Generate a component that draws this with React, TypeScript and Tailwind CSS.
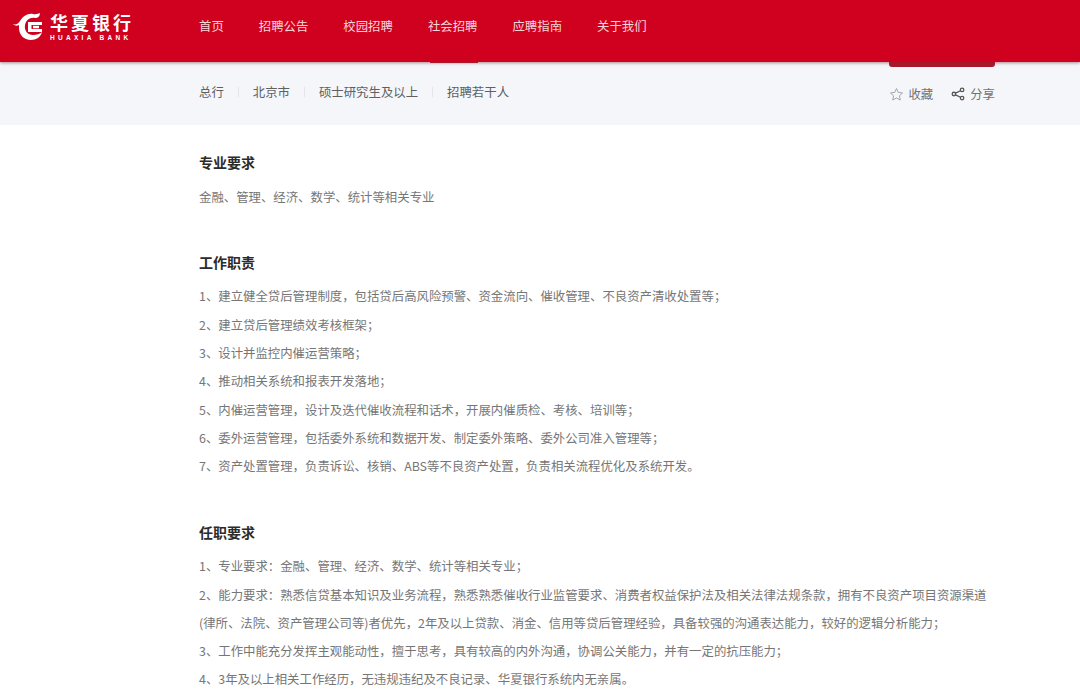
import React from 'react';

const font = { fontFamily: '"Noto Sans CJK SC", "Liberation Sans", sans-serif' };

const navItems = ['首页', '招聘公告', '校园招聘', '社会招聘', '应聘指南', '关于我们'];
const tags = ['总行', '北京市', '硕士研究生及以上', '招聘若干人'];

const duties = [
  '1、建立健全贷后管理制度，包括贷后高风险预警、资金流向、催收管理、不良资产清收处置等；',
  '2、建立贷后管理绩效考核框架；',
  '3、设计并监控内催运营策略；',
  '4、推动相关系统和报表开发落地；',
  '5、内催运营管理，设计及迭代催收流程和话术，开展内催质检、考核、培训等；',
  '6、委外运营管理，包括委外系统和数据开发、制定委外策略、委外公司准入管理等；',
  '7、资产处置管理，负责诉讼、核销、ABS等不良资产处置，负责相关流程优化及系统开发。',
];

const requirements = [
  '1、专业要求：金融、管理、经济、数学、统计等相关专业；',
  '2、能力要求：熟悉信贷基本知识及业务流程，熟悉熟悉催收行业监管要求、消费者权益保护法及相关法律法规条款，拥有不良资产项目资源渠道(律所、法院、资产管理公司等)者优先，2年及以上贷款、消金、信用等贷后管理经验，具备较强的沟通表达能力，较好的逻辑分析能力；',
  '3、工作中能充分发挥主观能动性，擅于思考，具有较高的内外沟通，协调公关能力，并有一定的抗压能力；',
  '4、3年及以上相关工作经历，无违规违纪及不良记录、华夏银行系统内无亲属。',
];

function Logo() {
  return (
    <div className="flex items-center text-white">
      <svg width="31" height="28" viewBox="0 0 31 28" className="shrink-0">
        {/* outer curl with the horn at top left */}
        <path
          d="M0 11 C3 12 5 11 7 8 C10 3 15 0 20 1 C23 1.500 25 1 27 0 C27 3 25 5 22 5 C17 4 13 7 12 12 C11 18 15 22 20 22 C24 22 27 21 29 19 C28 24 23 27 18 27 C11 27 6 22 6 15 C6 14 6 13 6 12 C4 13 2 13 0 11 Z"
          fill="#fff"
        />
        {/* inner square */}
        <path d="M15 9 H29 V12 H18.500 V16 H29 V19 H15 Z" fill="#fff" />
        <rect x="20" y="12.800" width="6" height="2.500" fill="#fff" />
      </svg>
      <div className="ml-[6px] flex flex-col items-start">
        <div className="text-[18px] leading-[17px] font-bold tracking-[3px]">华夏银行</div>
        <div className="mt-[3px] text-[6.500px] leading-[7px] font-bold tracking-[3.300px]" style={{ fontFamily: '"Liberation Sans", sans-serif' }}>HUAXIA BANK</div>
      </div>
    </div>
  );
}

function Section({ title, lines }: { title: string; lines: string[] }) {
  return (
    <section className="mb-[37.200px]">
      <h2 className="mb-[6.500px] text-[14px] leading-[28px] font-bold text-[#2b2b2b]">{title}</h2>
      {lines.map((line) => (
        <p key={line} className="text-[12.400px] leading-[28.300px] text-[#767676]">{line}</p>
      ))}
    </section>
  );
}

export default function App() {
  return (
    <div className="h-[692px] w-[1080px] overflow-hidden bg-white" style={font}>
      {/* Header */}
      <header className="relative z-10 flex h-[62px] items-center bg-[#d0011e] pl-[13px] shadow-[0_1px_3px_rgba(90,0,10,0.45)]">
        <div className="w-[186px] -translate-y-[4px]"><Logo /></div>
        <nav className="flex -translate-y-[5px] gap-[35px]">
          {navItems.map((item) => (
            <a key={item} className="text-[12.400px] leading-[20px] text-[#f9d5d9]">{item}</a>
          ))}
        </nav>
        <div className="absolute top-[62px] left-[430px] h-px w-[48px] bg-[#a81a2c]" />
        <div className="absolute top-[62px] left-[889px] h-[5px] w-[106px] rounded-b-[3px] bg-[#a8182c]" />
      </header>

      {/* Job summary */}
      <div className="flex h-[63px] items-start justify-between bg-[#f4f6fa] pt-[20px] pr-[85px] pl-[199px]">
        <div className="flex items-center">
          {tags.map((tag, i) => (
            <React.Fragment key={tag}>
              {i > 0 && <span className="mx-[14px] h-[10px] w-px bg-[#e3e5ea]" />}
              <span className="text-[12.400px] leading-[20px] text-[#606060]">{tag}</span>
            </React.Fragment>
          ))}
        </div>
        <div className="flex items-center pt-[2px] text-[12.400px] leading-[20px] text-[#727272]">
          <svg width="15" height="15" viewBox="0 0 24 24" fill="none" stroke="#a0a0a0" strokeWidth="1.500" strokeLinejoin="round">
            <path d="M12 2.500l2.900 6.200 6.800.8-5 4.600 1.300 6.700L12 17.500l-6 3.300 1.300-6.700-5-4.600 6.800-.8z" />
          </svg>
          <span className="ml-[4px]">收藏</span>
          <svg className="ml-[18px]" width="14" height="14" viewBox="0 0 24 24" fill="none" stroke="#555" strokeWidth="2.200">
            <circle cx="19" cy="5" r="3" />
            <circle cx="5" cy="12" r="3" />
            <circle cx="19" cy="19" r="3" />
            <path d="M7.700 10.500l8.600-4M7.700 13.500l8.600 4" />
          </svg>
          <span className="ml-[5px]">分享</span>
        </div>
      </div>

      {/* Job details */}
      <main className="w-[987px] pt-[23px] pl-[199px]">
        <Section title="专业要求" lines={['金融、管理、经济、数学、统计等相关专业']} />
        <Section title="工作职责" lines={duties} />
        <Section title="任职要求" lines={requirements} />
      </main>
    </div>
  );
}
